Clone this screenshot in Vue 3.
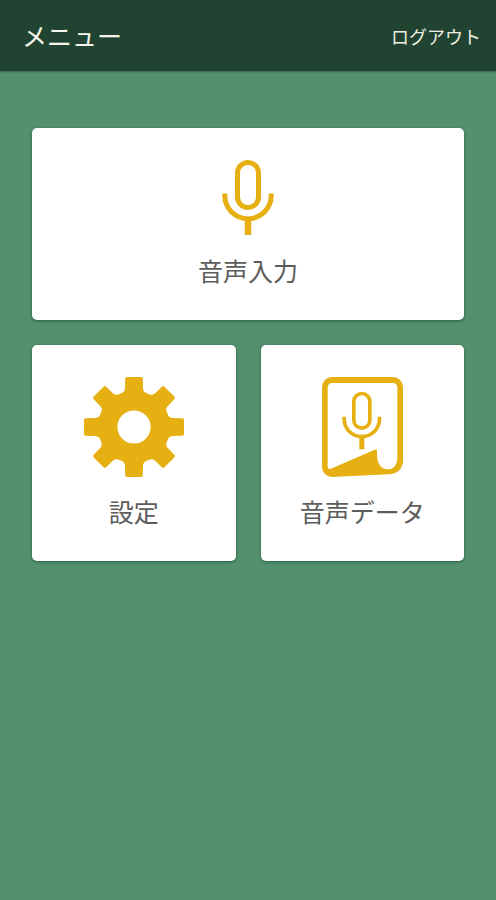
<template>
    <div class="page">
        <header class="bar">
            <h1>メニュー</h1>
            <button type="button" class="logout">ログアウト</button>
        </header>
        <main class="menu">
            <button type="button" class="card wide">
                <svg width="52" height="76" viewBox="0 0 52 76" aria-hidden="true">
                    <g fill="none" stroke="currentColor" stroke-width="5">
                        <rect x="15.5" y="2.5" width="21" height="45" rx="10.5" />
                        <path d="M2.8 33.5V35.5a23.2 23.2 0 0 0 46.4 0V33.5" />
                        <path d="M26 59V75" stroke-width="6.5" />
                    </g>
                </svg>
                <span>音声入力</span>
            </button>
            <button type="button" class="card">
                <svg width="100" height="100" viewBox="-50 -50 100 100" aria-hidden="true">
                    <g fill="currentColor">
                        <path v-for="angle in teeth" :key="angle" :transform="`rotate(${angle})`" d="M-7 -50H7Q8.8 -50 8.8 -48.2L9 -38.5Q9.2 -35.6 11.5 -34.2L13 -33.5V-24H-13V-33.5L-11.5 -34.2Q-9.2 -35.6 -9 -38.5L-8.8 -48.2Q-8.8 -50 -7 -50Z" />
                    </g>
                    <circle r="26.3" fill="none" stroke="currentColor" stroke-width="19.4" />
                </svg>
                <span>設定</span>
            </button>
            <button type="button" class="card">
                <svg width="81" height="100" viewBox="0 0 243 300" aria-hidden="true">
                    <path fill="currentColor" fill-rule="evenodd" d="M30 0H213A30 30 0 0 1 243 30V250C243 276 226 291 200 292L30 300A30 30 0 0 1 0 270V30A30 30 0 0 1 30 0ZM30 18A13 13 0 0 0 17 31V268Q17 278 27 275L163 216Q165 218 165 232C165 258 176 277 197 277C216 277 226 262 226 243V31A13 13 0 0 0 213 18Z" />
                    <g fill="none" stroke="currentColor" stroke-width="11">
                        <rect x="95.5" y="49.5" width="48" height="104" rx="24" />
                        <path d="M66.5 119V126a53 53 0 0 0 106 0V119" />
                        <path d="M119.5 180V217" stroke-width="15" />
                    </g>
                </svg>
                <span>音声データ</span>
            </button>
        </main>
    </div>
</template>

<script setup>
const teeth=[0,45,90,135,180,225,270,315];
</script>

<style>
body{
    margin: 0;
    background-color: #53906d;
}
</style>

<style scoped>
.page{
    min-height: 100vh;
    background-color: #53906d;
    font-family: "Noto Sans CJK JP", "Noto Sans", sans-serif;
}
.bar{
    display: flex;
    justify-content: space-between;
    align-items: center;
    padding: 17px 15px 17px 22px;
    background-color: #204431;
    box-shadow: 0 1px 2px rgba(0, 0, 0, 0.3);
}
h1{
    margin: 0;
    font-size: 25px;
    font-weight: 400;
    line-height: 37px;
    color: #f5f5ec;
}
button{
    border: none;
    font-family: inherit;
    cursor: pointer;
}
.logout{
    padding: 0;
    background: transparent;
    color: #f0eee2;
    font-size: 18px;
    line-height: 36px;
}
.menu{
    display: grid;
    grid-template-columns: 1fr 1fr;
    gap: 25px;
    padding: 57px 32px;
}
.card{
    display: flex;
    flex-direction: column;
    align-items: center;
    gap: 16px;
    padding: 32px 0;
    border-radius: 5px;
    background-color: white;
    color: #e6b012;
    box-shadow: 0 1px 3px rgba(0, 50, 25, 0.5);
}
.wide{
    grid-column: 1 / 3;
}
.card span{
    font-size: 25px;
    line-height: 36px;
    color: #5c5c5c;
}
</style>
